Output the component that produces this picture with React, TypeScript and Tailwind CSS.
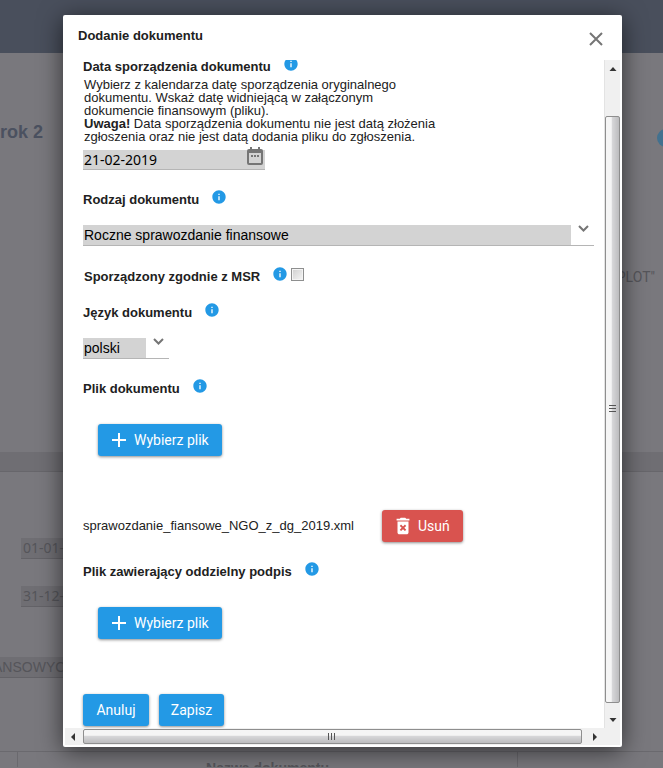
import { ReactNode } from "react";

const InfoIcon = () => (
  <svg className="h-4 w-4 flex-shrink-0 text-[#2399e5]" viewBox="0 0 24 24" fill="currentColor" aria-hidden="true">
    <path d="M12 2C6.48 2 2 6.48 2 12s4.48 10 10 10 10-4.48 10-10S17.52 2 12 2zm1 15h-2v-6h2v6zm0-8h-2V7h2v2z" />
  </svg>
);

const ChevronIcon = () => (
  <svg className="pointer-events-none h-5 w-[23px] flex-shrink-0" viewBox="0 0 23 20" fill="none" stroke="#757575" strokeWidth="2" aria-hidden="true">
    <path d="M8 1l4.500 4.500L17 1" />
  </svg>
);

const PlusIcon = () => (
  <svg className="h-5 w-5" viewBox="0 0 20 20" fill="currentColor" aria-hidden="true">
    <path d="M9 3h2v6h6v2h-6v6H9v-6H3V9h6z" />
  </svg>
);

const TrashIcon = () => (
  <svg className="h-5 w-5" viewBox="0 0 24 24" fill="currentColor" aria-hidden="true">
    <path d="M6 19c0 1.100.9 2 2 2h8c1.100 0 2-.9 2-2V7H6v12zm2.460-7.120l1.410-1.410L12 12.590l2.120-2.120 1.410 1.410L13.410 14l2.120 2.120-1.410 1.410L12 15.410l-2.120 2.120-1.410-1.410L10.590 14l-2.130-2.120zM15.500 4l-1-1h-5l-1 1H5v2h14V4z" transform="translate(-1.200 -1.200) scale(1.100)" />
  </svg>
);

const CalendarIcon = () => (
  <svg className="h-[18px] w-[18px]" viewBox="0 0 18 18" aria-hidden="true">
    <path fill="#757575" d="M4 0h2v2h6V0h2v2h1a2 2 0 0 1 2 2v12a2 2 0 0 1-2 2H3a2 2 0 0 1-2-2V4a2 2 0 0 1 2-2h1zM3 6v10h12V6z" />
    <path fill="#757575" d="M5 8h2v2H5zM8 8h2v2H8zM11 8h2v2h-2z" />
  </svg>
);

const FieldLabel = ({ htmlFor, children }: { htmlFor: string; children: ReactNode }) => (
  <div className="flex items-start gap-3">
    <label htmlFor={htmlFor} className="text-[13px] leading-[22px] font-bold">
      {children}
    </label>
    <InfoIcon />
  </div>
);

const buttonClass =
  "flex h-8 items-center rounded-[3px] font-[Roboto,sans-serif] text-sm text-white shadow-[0_1px_3px_rgba(0,0,0,0.45)]";
const iconButtonClass = "gap-[5px] pr-[13px] pl-[11px]";

// Page under the dialog
const PageBehind = () => (
  <div className="flex min-h-screen flex-col bg-[#79787d] text-[#55555a]">
    <header className="h-[53px] bg-[#494f5c]" />
    <div className="flex h-[399px] flex-col">
      <div className="flex items-center justify-between pt-16">
        <h1 className="text-lg leading-[26px] font-bold text-[#4b5160]">rok 2</h1>
        <span className="mt-3 -mr-3 h-[18px] w-[18px] rounded-full bg-[#42718f]" />
      </div>
      <p className="mt-[118px] pr-2 text-right font-[Roboto,sans-serif] text-sm leading-6">PLOT"</p>
    </div>
    <div className="h-5 border-b border-[#67666b] bg-[#6f6e73]" />
    <div className="flex flex-col items-start pt-[66px] font-['Noto_Sans',sans-serif] text-sm leading-5">
      <div className="ml-[21px] border-b border-[#636267] bg-[#6f6e73] pl-[2px]">01-01-</div>
      <div className="mt-[27px] ml-[21px] border-b border-[#636267] bg-[#6f6e73] pl-[2px]">31-12-</div>
      <div className="mt-[50px] -ml-[7px] border-b border-[#636267] bg-[#6f6e73] font-['Liberation_Sans',Arial,sans-serif]">
        ANSOWYC
      </div>
    </div>
    <div className="mt-[73px] flex h-4 overflow-hidden border-t border-[#6a696e] text-sm leading-5 font-bold">
      <div className="w-[18px] flex-shrink-0 border-r border-[#6a696e]" />
      <div className="w-[500px] flex-shrink-0 border-r border-[#6a696e] pt-[6px] text-center">Nazwa dokumentu</div>
    </div>
  </div>
);

const VerticalScrollbar = () => (
  <div className="mr-[2px] flex w-4 flex-shrink-0 flex-col items-center border-l border-[#e3e3e3] bg-[#f0f0f0]" aria-hidden="true">
    <svg className="h-[17px] w-4" viewBox="0 0 16 17" fill="#333">
      <path d="M4.500 11L8 7l3.500 4z" />
    </svg>
    <div className="mt-[39px] flex w-[15px] flex-1 items-center justify-center rounded-[2px] border border-[#8e8e8e] bg-linear-to-r from-[#f5f5f5] from-40% via-[#d6d6d8] via-50% to-[#bcbcbe]">
      <svg className="h-[9px] w-2" viewBox="0 0 8 9" fill="#555">
        <path d="M0 0h7v1H0zM0 3h7v1H0zM0 6h7v1H0z" />
      </svg>
    </div>
    <svg className="mt-2 h-[17px] w-4" viewBox="0 0 16 17" fill="#333">
      <path d="M4.500 7h7L8 11z" />
    </svg>
  </div>
);

const HorizontalScrollbar = () => (
  <div className="mx-[2px] flex h-[17px] items-center bg-[#f0f0f0]" aria-hidden="true">
    <svg className="h-4 w-[18px] flex-shrink-0" viewBox="0 0 18 16" fill="#333">
      <path d="M10 4v8L6 8z" />
    </svg>
    <div className="flex h-[15px] flex-1 items-center justify-center rounded-[2px] border border-[#8e8e8e] bg-linear-to-b from-[#f5f5f5] from-40% via-[#d6d6d8] via-50% to-[#bcbcbe]">
      <svg className="h-2 w-[9px]" viewBox="0 0 9 8" fill="#555">
        <path d="M0 0h1v7H0zM3 0h1v7H3zM6 0h1v7H6z" />
      </svg>
    </div>
    <svg className="mr-[22px] h-4 w-4 flex-shrink-0" viewBox="0 0 16 16" fill="#333">
      <path d="M11 4l4 4-4 4z" />
    </svg>
  </div>
);

const DocumentForm = () => (
  <form className="-mt-1 flex min-w-0 flex-1 flex-col pr-[10px] pb-[2px] pl-5" onSubmit={(e) => e.preventDefault()}>
    <FieldLabel htmlFor="date">Data sporządzenia dokumentu</FieldLabel>
    <p className="max-w-[362px] pl-px text-[13px] leading-[13px]">
      Wybierz z kalendarza datę sporządzenia oryginalnego dokumentu. Wskaż datę widniejącą w załączonym dokumencie
      finansowym (pliku).
      <br />
      <b>Uwaga!</b> Data sporządzenia dokumentu nie jest datą złożenia zgłoszenia oraz nie jest datą dodania pliku do
      zgłoszenia.
    </p>
    <div className="relative mt-[7px] w-[182px]">
      <input
        id="date"
        type="text"
        defaultValue="21-02-2019"
        className="block h-5 w-full border-b border-[#b5b5b5] bg-[#d3d3d3] pt-px pl-px font-['Noto_Sans',sans-serif] text-sm text-black"
      />
      <button type="button" aria-label="Kalendarz" className="absolute -top-[3px] right-px">
        <CalendarIcon />
      </button>
    </div>

    <div className="mt-[19px]">
      <FieldLabel htmlFor="kind">Rodzaj dokumentu</FieldLabel>
      <div className="mt-[14px] flex border-b border-[#b5b5b5]">
        <select id="kind" className="h-5 min-w-0 flex-1 appearance-none bg-[#d3d3d3] pl-px text-sm leading-5 text-black">
          <option>Roczne sprawozdanie finansowe</option>
        </select>
        <ChevronIcon />
      </div>
    </div>

    <div className="mt-5 flex items-start pl-px">
      <FieldLabel htmlFor="msr">Sporządzony zgodnie z MSR</FieldLabel>
      <input
        id="msr"
        type="checkbox"
        className="mt-[2px] ml-[3px] h-[13px] w-[13px] appearance-none border border-[#8e8f8f] bg-linear-to-br from-[#cfcfcf] to-[#f6f6f6] shadow-[inset_0_0_0_1px_#f4f4f4]"
      />
    </div>

    <div className="mt-[14px]">
      <FieldLabel htmlFor="lang">Język dokumentu</FieldLabel>
      <div className="mt-[14px] flex w-[86px] border-b border-[#b5b5b5]">
        <select id="lang" className="h-5 min-w-0 flex-1 appearance-none bg-[#d3d3d3] pl-px text-sm leading-5 text-black">
          <option>polski</option>
        </select>
        <ChevronIcon />
      </div>
    </div>

    <div className="mt-[19px]">
      <FieldLabel htmlFor="file">Plik dokumentu</FieldLabel>
      <button id="file" type="button" className={`${buttonClass} ${iconButtonClass} mt-6 ml-[15px] bg-[#2399e5]`}>
        <PlusIcon />
        Wybierz plik
      </button>
    </div>

    <div className="mt-[54px] flex items-center gap-7">
      <span className="text-[13px] leading-5">sprawozdanie_fiansowe_NGO_z_dg_2019.xml</span>
      <button type="button" className={`${buttonClass} ${iconButtonClass} bg-[#d9534f]`}>
        <TrashIcon />
        Usuń
      </button>
    </div>

    <div className="mt-[19px]">
      <FieldLabel htmlFor="signature">Plik zawierający oddzielny podpis</FieldLabel>
      <button id="signature" type="button" className={`${buttonClass} ${iconButtonClass} mt-6 ml-[15px] bg-[#2399e5]`}>
        <PlusIcon />
        Wybierz plik
      </button>
    </div>

    <div className="mt-[55px] flex gap-[10px]">
      <button type="button" className={`${buttonClass} min-w-[66px] justify-center bg-[#2399e5]`}>
        Anuluj
      </button>
      <button type="submit" className={`${buttonClass} min-w-[65px] justify-center bg-[#2399e5]`}>
        Zapisz
      </button>
    </div>
  </form>
);

const App = () => {
  return (
    <div className="relative overflow-hidden font-['Liberation_Sans',Arial,sans-serif]">
      <PageBehind />

      {/* Dialog */}
      <div className="absolute inset-x-0 top-0 pt-[15px] pr-[41px] pl-[63px]">
        <div
          role="dialog"
          aria-labelledby="dialog-title"
          className="rounded-[2px] bg-white pb-[2px] text-[#212121] shadow-[0_4px_24px_rgba(0,0,0,0.6)]"
        >
          <div className="flex h-[45px] items-start justify-between pr-[18px] pl-[15px]">
            <h2 id="dialog-title" className="pt-[10px] text-[13px] leading-[22px] font-bold">
              Dodanie dokumentu
            </h2>
            <button type="button" aria-label="Zamknij" className="mt-4">
              <svg className="h-4 w-4" viewBox="0 0 16 16" fill="none" stroke="#757575" strokeWidth="2">
                <path d="M2 2l12 12M14 2L2 14" />
              </svg>
            </button>
          </div>
          <div className="flex overflow-hidden">
            <DocumentForm />
            <VerticalScrollbar />
          </div>
          <HorizontalScrollbar />
        </div>
      </div>
    </div>
  );
};

export default App;
